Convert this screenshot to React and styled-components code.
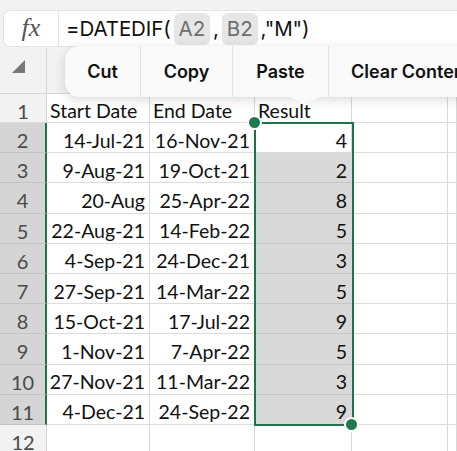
import React from "react";
import styled, { createGlobalStyle } from "styled-components";

const Global = createGlobalStyle`
  html, body { margin: 0; padding: 0; background: #ffffff; }
  body { overflow: hidden; }
  * { box-sizing: border-box; }
`;

const Screen = styled.div`
  position: relative;
  width: 457px;
  height: 451px;
  overflow: hidden;
  background: #f2f2f2;
  font-family: "Lato", "Noto Sans", sans-serif;
`;

const FormulaArea = styled.div`
  height: 48px;
  padding: 10px 0 1px 3px;
  background: #f2f2f2;
`;

const FormulaField = styled.div`
  display: flex;
  align-items: center;
  height: 37px;
  background: #ffffff;
  border: 1px solid #e4e4e4;
  border-right: none;
  border-radius: 7px 0 0 7px;
`;

const FxBox = styled.div`
  width: 55px;
  height: 100%;
  display: flex;
  align-items: center;
  justify-content: center;
  border-right: 1px solid #e2e2e2;
  font-family: "Liberation Serif", serif;
  font-style: italic;
  font-size: 26px;
  color: #555;
  padding-bottom: 2px;
`;

const FormulaText = styled.div`
  display: flex;
  align-items: center;
  padding-left: 7px;
  font-family: "Inter", "Noto Sans", sans-serif;
  font-size: 20.5px;
  color: #111;
  white-space: nowrap;
  letter-spacing: -0.1px;
`;

const RefChip = styled.span`
  display: inline-flex;
  align-items: center;
  height: 32px;
  padding: 0 5px;
  margin: 0 3px;
  border-radius: 6px;
  background: #e6e6e6;
  color: #6d6d6d;
`;

const HeaderRow = styled.div`
  display: grid;
  grid-template-columns: 47px 103px 105px 97px 96px 1fr;
  height: 46px;
  background: #f2f2f2;
  border-bottom: 1px solid #d6d6d6;
`;

const HeaderCell = styled.div`
  border-right: 1px solid #d6d6d6;
`;

const Corner = styled(HeaderCell)`
  display: flex;
  padding: 12px 0 0 12px;
`;

const Triangle = styled.div`
  width: 0;
  height: 0;
  border-left: 13px solid transparent;
  border-bottom: 13px solid #777;
`;

const Sheet = styled.div`
  position: relative;
  display: grid;
  grid-template-columns: 47px 103px 105px 97px 96px 1fr;
  grid-template-rows: 29px repeat(11, 30.2px);
  background: #fff;
`;

const RowHead = styled.div`
  display: flex;
  align-items: center;
  justify-content: center;
  background: ${(p) => (p.$sel ? "#d5d5d5" : "#f2f2f2")};
  border-bottom: 1px solid ${(p) => (p.$sel ? "#c4c4c4" : "#dcdcdc")};
  border-right: ${(p) => (p.$sel ? "2px solid #217346" : "1px solid #d6d6d6")};
  color: #4a4a4a;
  font-size: 20px;
  padding-top: 5px;
`;

const Cell = styled.div`
  display: flex;
  align-items: center;
  justify-content: ${(p) => (p.$left ? "flex-start" : "flex-end")};
  padding: 5px 4px 0 3px;
  background: ${(p) => (p.$sel ? "#d9d9d9" : "#ffffff")};
  border-right: 1px solid #d9d9d9;
  border-bottom: 1px solid ${(p) => (p.$sel ? "#c6c6c6" : "#dcdcdc")};
  color: #111;
  font-size: 19.5px;
  white-space: nowrap;
  overflow: hidden;
`;

const SelFrame = styled.div`
  position: absolute;
  left: 254px;
  top: 28px;
  width: 100px;
  height: 304px;
  border: 2px solid #217346;
  pointer-events: none;
`;

const Handle = styled.div`
  position: absolute;
  width: 15px;
  height: 15px;
  border-radius: 50%;
  background: #1e7a4c;
  border: 2px solid #ffffff;
  left: ${(p) => p.$x}px;
  top: ${(p) => p.$y}px;
`;

const Menu = styled.div`
  position: absolute;
  left: 65px;
  top: 46px;
  height: 51px;
  width: 420px;
  display: flex;
  background: #fafafa;
  border-radius: 14px;
  box-shadow: 0 3px 12px rgba(0, 0, 0, 0.14), 0 0 1px rgba(0, 0, 0, 0.1);
  font-family: "Inter", "Noto Sans", sans-serif;
`;

const MenuItem = styled.div`
  display: flex;
  align-items: center;
  justify-content: center;
  width: ${(p) => p.$w}px;
  flex-shrink: 0;
  padding: 0 ${(p) => (p.$w ? 0 : 22)}px;
  border-right: 1px solid #e2e2e2;
  font-size: 18px;
  font-weight: 600;
  color: #111;
  white-space: nowrap;
  &:last-child { border-right: none; }
`;

const Arrow = styled.svg`
  position: absolute;
  left: 223px;
  top: 50px;
`;

const rows = [
  ["14-Jul-21", "16-Nov-21", "4"],
  ["9-Aug-21", "19-Oct-21", "2"],
  ["20-Aug", "25-Apr-22", "8"],
  ["22-Aug-21", "14-Feb-22", "5"],
  ["4-Sep-21", "24-Dec-21", "3"],
  ["27-Sep-21", "14-Mar-22", "5"],
  ["15-Oct-21", "17-Jul-22", "9"],
  ["1-Nov-21", "7-Apr-22", "5"],
  ["27-Nov-21", "11-Mar-22", "3"],
  ["4-Dec-21", "24-Sep-22", "9"],
];

export default function App() {
  return (
    <Screen>
      <Global />
      <FormulaArea>
        <FormulaField>
          <FxBox>fx</FxBox>
          <FormulaText>
            =DATEDIF(<RefChip>A2</RefChip>,<RefChip>B2</RefChip>,"M")
          </FormulaText>
        </FormulaField>
      </FormulaArea>
      <HeaderRow>
        <Corner>
          <Triangle />
        </Corner>
        <HeaderCell />
        <HeaderCell />
        <HeaderCell />
        <HeaderCell />
        <HeaderCell />
      </HeaderRow>
      <Sheet>
        <RowHead>1</RowHead>
        <Cell $left>Start Date</Cell>
        <Cell $left>End Date</Cell>
        <Cell $left>Result</Cell>
        <Cell />
        <Cell />
        {rows.map((r, i) => (
          <React.Fragment key={i}>
            <RowHead $sel>{i + 2}</RowHead>
            <Cell>{r[0]}</Cell>
            <Cell>{r[1]}</Cell>
            <Cell $sel={i > 0}>{r[2]}</Cell>
            <Cell />
            <Cell />
          </React.Fragment>
        ))}
        <RowHead>12</RowHead>
        <Cell />
        <Cell />
        <Cell />
        <Cell />
        <Cell />
        <SelFrame />
        <Handle $x={247} $y={21} />
        <Handle $x={344} $y={323} />
      </Sheet>
      <Menu>
        <MenuItem $w={76}>Cut</MenuItem>
        <MenuItem $w={92}>Copy</MenuItem>
        <MenuItem $w={96}>Paste</MenuItem>
        <MenuItem>Clear Contents</MenuItem>
        <Arrow width="34" height="8" viewBox="0 0 34 8">
          <path d="M0 0 L13 6 Q17 8 21 6 L34 0 Z" fill="#fafafa" />
        </Arrow>
      </Menu>
    </Screen>
  );
}
